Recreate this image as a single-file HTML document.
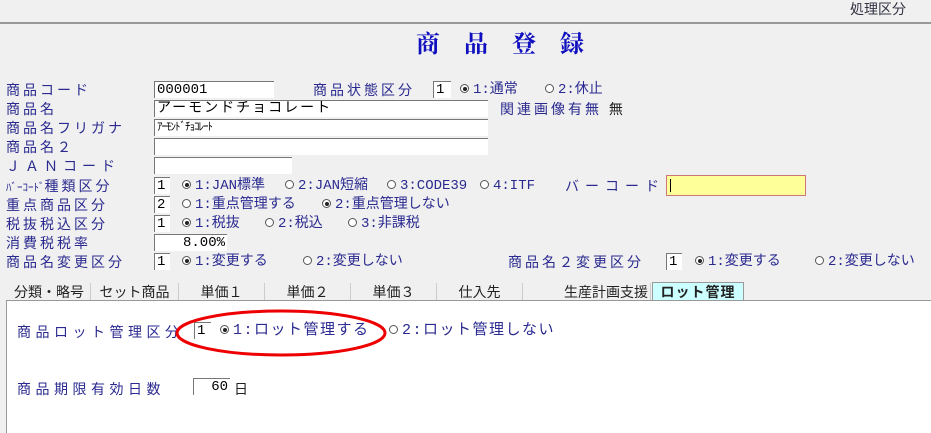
<!DOCTYPE html><html><head><meta charset="utf-8"><style>
body{margin:0;width:931px;height:432px;background:#f0f0f0;position:relative;overflow:hidden;font-family:"Liberation Sans","Noto Sans CJK JP",sans-serif;font-size:14px}
.a{position:absolute;white-space:nowrap;line-height:18px}
.l{color:#2a2a90;letter-spacing:3px}
.b{color:#2a2a90}
.o{position:absolute;white-space:nowrap;line-height:18px;color:#2a2a90;font-family:"Liberation Mono","Noto Sans CJK JP",monospace;font-size:14px}
.i{position:absolute;background:#fff;border-top:1px solid #777;border-left:1px solid #777;font-size:14px;line-height:16px;padding-left:2px;box-sizing:border-box;height:17px;font-family:"Liberation Mono","Noto Sans CJK JP",monospace}
.r{display:inline-block;width:9px;height:9px;border:1px solid #555;border-radius:50%;margin-right:4px;vertical-align:0;box-sizing:border-box;position:relative;background:#fff}
.r.s::after{content:"";position:absolute;left:1.5px;top:1.5px;width:4px;height:4px;border-radius:50%;background:#222}
.t{position:absolute;top:283px;height:18px;line-height:18px;text-align:center;color:#222;border-right:1px solid #ccc;font-size:14px}
</style></head><body>
<div style="position:absolute;left:0;top:22px;width:931px;height:2px;background:#999"></div>
<div class="a" style="left:850px;top:0;color:#334;">処理区分</div>
<div class="a" style="left:416px;top:28px;font-size:24px;line-height:28px;color:#1010c0;font-weight:bold;font-family:'Noto Serif CJK SC',serif;letter-spacing:24px">商品登録</div>

<div class="a l" style="left:6px;top:81px">商品コード</div>
<div class="i" style="left:154px;top:81px;width:120px">000001</div>
<div class="a l" style="left:313px;top:81px">商品状態区分</div>
<div class="i" style="left:433px;top:81px;width:18px">1</div>
<div class="o" style="left:460px;top:81px"><span class="r s"></span>1:通常</div>
<div class="o" style="left:545px;top:81px"><span class="r"></span>2:休止</div>

<div class="a l" style="left:6px;top:100px">商品名</div>
<div class="i" style="left:154px;top:100px;width:334px;letter-spacing:2px">アーモンドチョコレート</div>
<div class="a l" style="left:500px;top:100px">関連画像有無 <span style="color:#222">無</span></div>

<div class="a l" style="left:6px;top:119px">商品名フリガナ</div>
<div class="i" style="left:154px;top:119px;width:334px;font-size:11px;letter-spacing:-1px">ｱｰﾓﾝﾄﾞﾁｮｺﾚｰﾄ</div>

<div class="a l" style="left:6px;top:138px">商品名２</div>
<div class="i" style="left:154px;top:138px;width:334px"></div>

<div class="a l" style="left:6px;top:157px;letter-spacing:5px">ＪＡＮコード</div>
<div class="i" style="left:154px;top:157px;width:138px"></div>

<div class="a l" style="left:6px;top:177px"><span style="font-size:11px;letter-spacing:0">ﾊﾞｰｺｰﾄﾞ</span>種類区分</div>
<div class="i" style="left:154px;top:177px;width:16px">1</div>
<div class="o" style="left:182px;top:177px"><span class="r s"></span>1:JAN標準</div>
<div class="o" style="left:285px;top:177px"><span class="r"></span>2:JAN短縮</div>
<div class="o" style="left:387px;top:177px"><span class="r"></span>3:CODE39</div>
<div class="o" style="left:480px;top:177px"><span class="r"></span>4:ITF</div>
<div class="a l" style="left:565px;top:177px;letter-spacing:6px">バーコード</div>
<div style="position:absolute;left:666px;top:175px;width:140px;height:21px;background:#ffff99;border:1px solid #c77;box-sizing:border-box"><div style="position:absolute;left:3px;top:3px;width:1px;height:13px;background:#000"></div></div>

<div class="a l" style="left:6px;top:196px">重点商品区分</div>
<div class="i" style="left:154px;top:196px;width:16px">2</div>
<div class="o" style="left:182px;top:196px"><span class="r"></span>1:重点管理する</div>
<div class="o" style="left:322px;top:196px"><span class="r s"></span>2:重点管理しない</div>

<div class="a l" style="left:6px;top:215px">税抜税込区分</div>
<div class="i" style="left:154px;top:215px;width:16px">1</div>
<div class="o" style="left:182px;top:215px"><span class="r s"></span>1:税抜</div>
<div class="o" style="left:265px;top:215px"><span class="r"></span>2:税込</div>
<div class="o" style="left:348px;top:215px"><span class="r"></span>3:非課税</div>

<div class="a l" style="left:6px;top:234px">消費税税率</div>
<div class="i" style="left:154px;top:234px;width:73px;text-align:right;padding-right:2px">8.00%</div>

<div class="a l" style="left:6px;top:253px">商品名変更区分</div>
<div class="i" style="left:154px;top:253px;width:16px">1</div>
<div class="o" style="left:182px;top:253px"><span class="r s"></span>1:変更する</div>
<div class="o" style="left:303px;top:253px"><span class="r"></span>2:変更しない</div>
<div class="a l" style="left:508px;top:253px">商品名２変更区分</div>
<div class="i" style="left:666px;top:253px;width:16px">1</div>
<div class="o" style="left:695px;top:253px"><span class="r s"></span>1:変更する</div>
<div class="o" style="left:815px;top:253px"><span class="r"></span>2:変更しない</div>

<div class="t" style="left:8px;width:82px">分類・略号</div>
<div class="t" style="left:91px;width:87px">セット商品</div>
<div class="t" style="left:179px;width:85px">単価１</div>
<div class="t" style="left:265px;width:85px">単価２</div>
<div class="t" style="left:351px;width:85px">単価３</div>
<div class="t" style="left:437px;width:85px">仕入先</div>
<div class="t" style="left:523px;width:128px;text-align:right;padding-right:2px;box-sizing:border-box">生産計画支援</div>
<div class="t" style="left:652px;width:90px;background:#ccffff;font-weight:bold;border:1px solid #999;border-bottom:none;top:282px;letter-spacing:1px">ロット管理</div>
<div style="position:absolute;left:6px;top:300px;width:925px;height:132px;background:#fff;border-top:1px solid #999;border-left:1px solid #999"></div>

<div class="a l" style="left:17px;top:323px;letter-spacing:4.5px">商品ロット管理区分</div>
<div class="i" style="left:194px;top:322px;width:17px">1</div>
<div class="o" style="left:220px;top:322px;font-size:15px;letter-spacing:1.5px"><span class="r s"></span>1:ロット管理する</div>
<div class="o" style="left:389px;top:322px;font-size:15px;letter-spacing:1.5px"><span class="r"></span>2:ロット管理しない</div>
<svg style="position:absolute;left:0;top:0" width="931" height="432"><ellipse cx="281" cy="333" rx="104" ry="22" fill="none" stroke="#e00" stroke-width="3"/></svg>

<div class="a l" style="left:17px;top:380px;letter-spacing:4.5px">商品期限有効日数</div>
<div class="i" style="left:193px;top:378px;width:37px;text-align:right;padding-right:2px">60</div>
<div class="a" style="left:234px;top:380px;color:#222">日</div>
</body></html>
